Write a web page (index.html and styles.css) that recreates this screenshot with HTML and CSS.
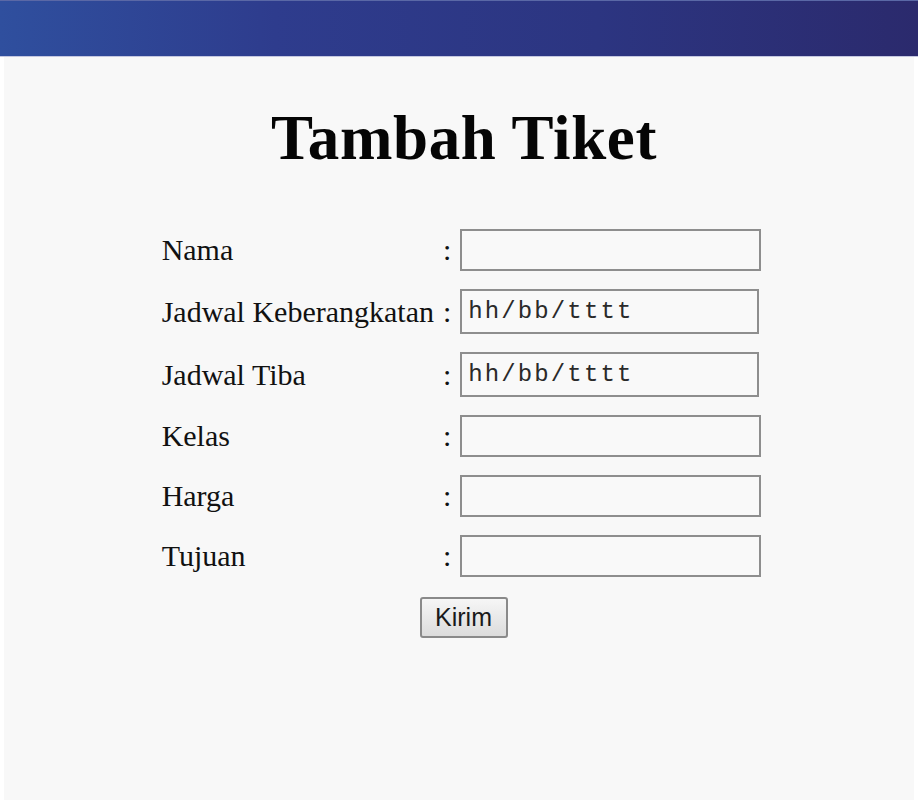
FILE: index.html
```html
<!DOCTYPE html>
<html lang="id">
<head>
    <meta charset="UTF-8">
    <meta name="viewport" content="width=device-width, initial-scale=1.0">
    <title>Tambah Tiket</title>

    <!-- CSS Styles -->
    <link rel="stylesheet" href="styles.css">
</head>
<body>

    <!-- Header bar -->
    <div class="header"></div>

    <!-- Form Container -->
    <div class="content">
        <h1>Tambah Tiket</h1>

        <form class="ticket-form" onsubmit="return false;">
            <label for="nama">Nama</label>
            <span class="colon">:</span>
            <input type="text" id="nama" />

            <label for="berangkat">Jadwal Keberangkatan</label>
            <span class="colon">:</span>
            <input type="text" id="berangkat" class="date-input" placeholder="hh/bb/tttt" />

            <label for="tiba">Jadwal Tiba</label>
            <span class="colon">:</span>
            <input type="text" id="tiba" class="date-input" placeholder="hh/bb/tttt" />

            <label for="kelas">Kelas</label>
            <span class="colon">:</span>
            <input type="text" id="kelas" />

            <label for="harga">Harga</label>
            <span class="colon">:</span>
            <input type="text" id="harga" />

            <label for="tujuan">Tujuan</label>
            <span class="colon">:</span>
            <input type="text" id="tujuan" />

            <div class="actions">
                <button type="submit">Kirim</button>
            </div>
        </form>
    </div>

</body>
</html>
```

FILE: styles.css
```css
body {
    margin: 0;
    padding: 0;
    background: #ffffff;
    font-family: 'Liberation Serif', 'Times New Roman', serif;
    color: #111;
}

.header {
    height: 55px;
    background: linear-gradient(to right, #2f4f9e 0%, #2e3c8d 30%, #2c3581 65%, #2b2a6d 100%);
    border-top: 1px solid #5a68a6;
    border-bottom: 1px solid #c4c7e0;
}

.content {
    background: #f8f8f8;
    margin: 0 4px;
    height: 743px;
    padding-top: 45px;
    box-sizing: border-box;
}

h1 {
    margin: 0 0 55px;
    padding-left: 10px;
    font-size: 63px;
    line-height: 72px;
    letter-spacing: 0.6px;
    font-weight: bold;
    text-align: center;
    color: #050505;
}

.ticket-form {
    display: grid;
    grid-template-columns: auto auto 301px;
    column-gap: 9px;
    row-gap: 18px;
    align-items: center;
    width: max-content;
    margin: 0 auto;
    padding-left: 5px;
}

label {
    font-size: 30px;
    color: #111;
}

.colon {
    font-size: 30px;
}

input {
    height: 42px;
    width: 301px;
    box-sizing: border-box;
    border: 2px solid #8e8e8e;
    background: #f9f9f9;
    padding: 0 6px;
    margin: 0;
    font-size: 20px;
}

input:focus {
    outline: none;
    border-color: #6b6b6b;
}

.date-input {
    height: 45px;
    width: 299px;
    font-family: 'Liberation Mono', 'Courier New', monospace;
    font-size: 24px;
    letter-spacing: 2.1px;
}

.date-input::placeholder {
    color: #2a2a2a;
    opacity: 1;
}

.actions {
    grid-column: 1 / -1;
    text-align: center;
    margin-top: 2px;
    padding-left: 4px;
}

button {
    width: 88px;
    height: 41px;
    font-family: 'Liberation Sans', Arial, sans-serif;
    font-size: 25px;
    color: #1a1a1a;
    background: linear-gradient(to bottom, #f6f6f6, #dcdcdc);
    border: 2px solid #8a8a8a;
    border-radius: 3px;
    cursor: pointer;
    padding: 0;
}

button:hover {
    background: linear-gradient(to bottom, #eaf4fb, #d2e6f4);
}
```
